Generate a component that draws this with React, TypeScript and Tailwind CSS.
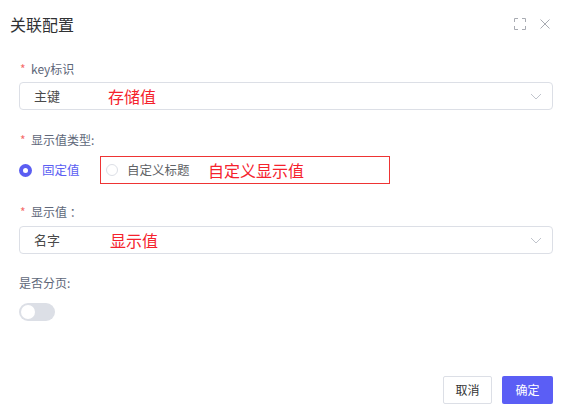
import React from "react";

const font = { fontFamily: '"Noto Sans CJK SC", "Noto Sans", sans-serif' };

function Chevron() {
  return (
    <svg width="12" height="7" viewBox="0 0 12 7" className="text-[#c0c4cc]">
      <path d="M1 1l5 5 5-5" fill="none" stroke="currentColor" strokeWidth="1" />
    </svg>
  );
}

function Label({ text, required }: { text: string; required?: boolean }) {
  return (
    <div className="flex h-[20px] items-center text-[12px] text-[#5e6779]">
      {required && <span className="mr-[5px] ml-[1px] w-[6px] text-[#f56c6c] leading-none">*</span>}
      <span>{text}</span>
    </div>
  );
}

function Select({ value, note, valueWidth }: { value: string; note: string; valueWidth: string }) {
  return (
    <div className="flex h-[28px] items-center rounded-[4px] border border-[#dcdfe6] bg-white pl-[14px] pr-[10px]">
      <span className={`${valueWidth} text-[13px] text-[#4a4a4a]`}>{value}</span>
      <span className="text-[16px] text-[#f5222d]">{note}</span>
      <span className="ml-auto flex items-center">
        <Chevron />
      </span>
    </div>
  );
}

export default function App() {
  return (
    <div className="h-[408px] w-[574px] bg-white" style={font}>
      <div className="flex h-[48px] items-center pl-[10px] pr-[24px]">
        <span className="text-[16px] text-[#303133]">关联配置</span>
        <div className="ml-auto flex items-center gap-[14px]">
          <svg width="12" height="12" viewBox="0 0 12 12" className="text-[#a8abb2]">
            <path
              d="M0.5 4V0.5H4M8 0.5H11.5V4M11.5 8V11.5H8M4 11.5H0.5V8"
              fill="none"
              stroke="currentColor"
              strokeWidth="1"
            />
          </svg>
          <svg width="10" height="10" viewBox="0 0 10 10" className="text-[#a8abb2]">
            <path d="M0.5 0.5L9.5 9.5M9.5 0.5L0.5 9.5" fill="none" stroke="currentColor" strokeWidth="1" />
          </svg>
        </div>
      </div>

      <div className="pl-[19px] pr-[21px]">
        <div className="mt-[11px]">
          <Label text="key标识" required />
          <div className="mt-[3px]">
            <Select value="主键" note="存储值" valueWidth="w-[74px]" />
          </div>
        </div>

        <div className="mt-[20px]">
          <Label text="显示值类型:" required />
          <div className="mt-[6px] flex h-[28px] items-center">
            <div className="flex items-center">
              <span className="flex h-[13px] w-[13px] items-center justify-center rounded-full bg-[#5b5ef2]">
                <span className="h-[5px] w-[5px] rounded-full bg-white" />
              </span>
              <span className="ml-[10px] w-[37px] whitespace-nowrap text-[12.5px] text-[#5b5ef2]">固定值</span>
            </div>
            <div className="ml-[21px] flex h-[28px] w-[290px] items-center border border-[#ee3434] pl-[5px]">
              <span className="h-[12px] w-[12px] shrink-0 rounded-full border border-[#dcdfe6] bg-white" />
              <span className="ml-[9px] w-[64px] whitespace-nowrap text-[12.5px] text-[#606266]">自定义标题</span>
              <span className="ml-[17px] whitespace-nowrap text-[16px] text-[#f5222d]">自定义显示值</span>
            </div>
          </div>
        </div>

        <div className="mt-[18px]">
          <Label text="显示值 ：" required />
          <div className="mt-[4px]">
            <Select value="名字" note="显示值" valueWidth="w-[76px]" />
          </div>
        </div>

        <div className="mt-[19px]">
          <Label text="是否分页:" />
          <div className="mt-[10px] flex h-[18px] w-[36px] items-center rounded-full bg-[#dcdfe6] px-[2px]">
            <span className="h-[14px] w-[14px] rounded-full bg-white" />
          </div>
        </div>

        <div className="mt-[55px] flex justify-end gap-[10px]">
          <button className="h-[28px] w-[49px] rounded-[2px] border border-[#dcdfe6] bg-white text-[12px] text-[#333]">
            取消
          </button>
          <button className="h-[28px] w-[51px] rounded-[2px] bg-[#5b5ef5] text-[12px] text-white">确定</button>
        </div>
      </div>
    </div>
  );
}
